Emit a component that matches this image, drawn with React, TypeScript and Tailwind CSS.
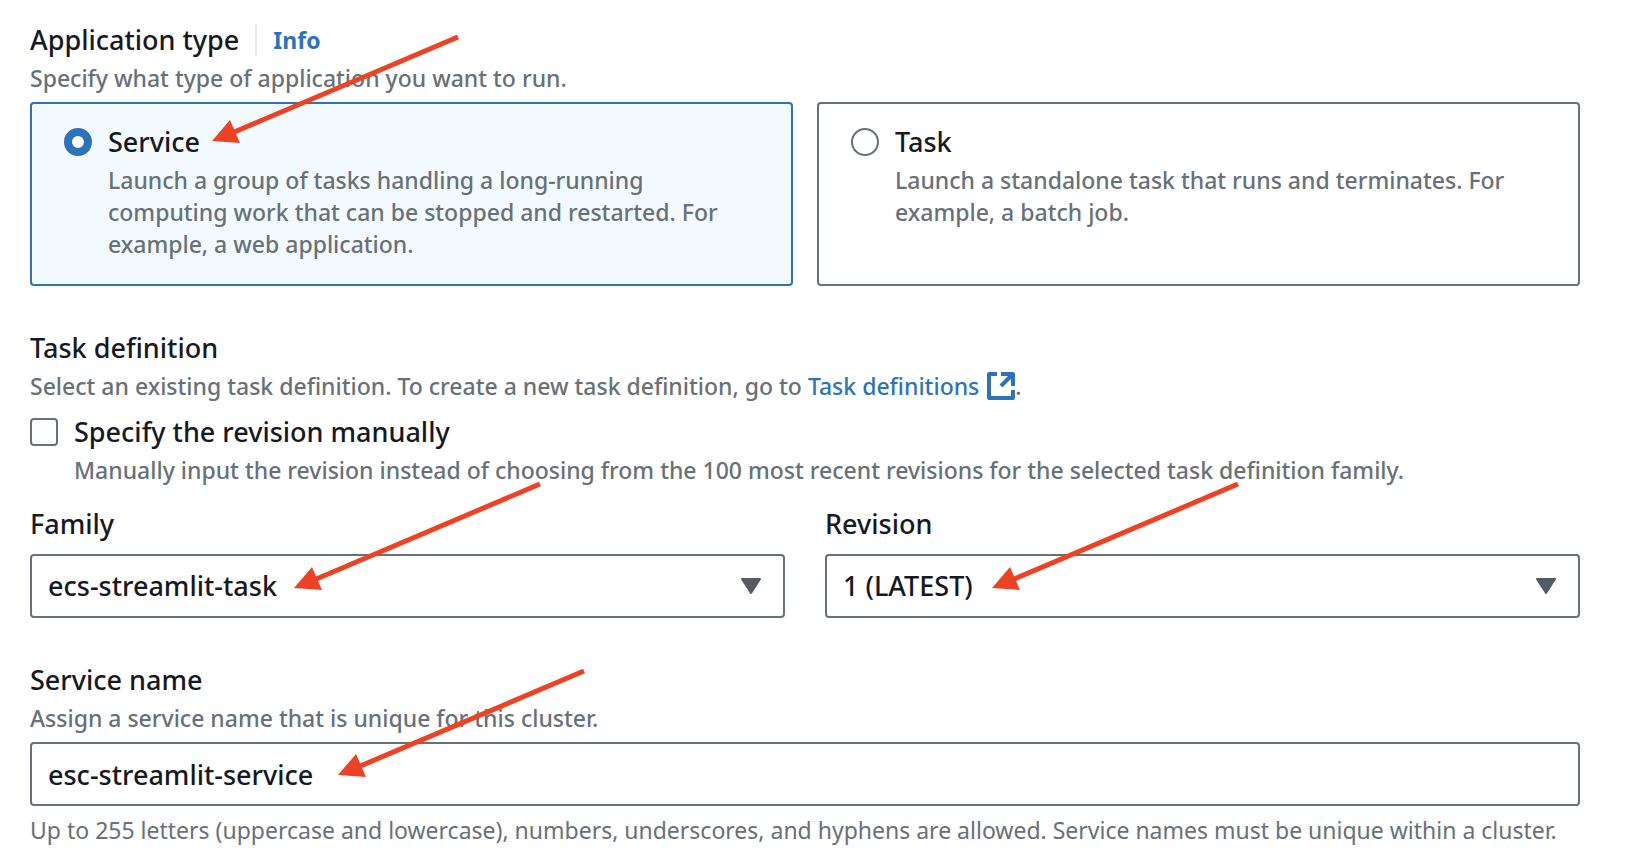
import { useState, type ReactNode } from "react";

function Arrow({ className }: { className: string }) {
  return (
    <svg
      className={`pointer-events-none absolute z-10 ${className}`}
      width="248"
      height="110"
      viewBox="0 0 248 110"
      aria-hidden="true"
    >
      <path d="M246 2 L20 98" stroke="#ec4226" strokeWidth="5" fill="none" />
      <path d="M0 106 L18 85 L28 108 Z" fill="#ec4226" />
    </svg>
  );
}

function ExternalIcon() {
  return (
    <svg
      className="ml-2 inline-block align-[-5px]"
      width="28"
      height="28"
      viewBox="0 0 28 28"
      fill="none"
      stroke="currentColor"
      strokeWidth="4"
      role="img"
      aria-label="Opens in a new tab"
    >
      <path d="M10 2H2v24h24v-8" strokeLinejoin="round" />
      <path d="M14 2h12v12" strokeLinejoin="round" />
      <path d="M25 3 14 14" />
    </svg>
  );
}

function Description({ children, id }: { children: ReactNode; id?: string }) {
  return (
    <p id={id} className="text-[23px] leading-8 text-[#687078]">
      {children}
    </p>
  );
}

type TileProps = {
  value: string;
  title: string;
  text: string;
  checked: boolean;
  onSelect: (value: string) => void;
  children?: ReactNode;
};

function Tile({ value, title, text, checked, onSelect, children }: TileProps) {
  return (
    <label
      className={`relative flex items-start gap-4 rounded-sm border-2 pt-[18px] pr-12 pb-6 pl-8 ${
        checked ? "border-[#2e73b8] bg-[#f2fafd]" : "border-[#687078] bg-white"
      }`}
    >
      <input
        type="radio"
        name="application-type"
        value={value}
        checked={checked}
        onChange={() => onSelect(value)}
        className="mt-1.5 size-7 shrink-0 appearance-none rounded-full border-2 border-[#687078] bg-white checked:border-8 checked:border-[#2e73b8]"
      />
      <span className="flex flex-col gap-0.5">
        <span className="text-[27px] leading-10">{title}</span>
        <span className="text-[23px] leading-8 text-[#687078]">{text}</span>
      </span>
      {children}
    </label>
  );
}

type SelectProps = { id: string; label: string; option: string; children?: ReactNode };

function SelectField({ id, label, option, children }: SelectProps) {
  return (
    <div className="relative flex flex-col gap-2.5">
      <label htmlFor={id} className="text-[27px] leading-10">
        {label}
      </label>
      <div className="relative">
        <select
          id={id}
          className="h-16 w-full appearance-none rounded-sm border-2 border-[#687078] bg-white pr-16 pl-4 text-[27px] font-medium"
        >
          <option>{option}</option>
        </select>
        <svg
          className="pointer-events-none absolute top-6 right-6"
          width="20"
          height="16"
          viewBox="0 0 20 16"
          fill="#545b64"
          stroke="#545b64"
          strokeWidth="2"
          strokeLinejoin="round"
          aria-hidden="true"
        >
          <path d="M1 1h18l-9 14Z" />
        </svg>
      </div>
      {children}
    </div>
  );
}

export default function App() {
  const [type, setType] = useState("service");

  return (
    <main className="bg-white pt-5 pr-[52px] pb-4 pl-[30px] font-['Noto_Sans','Open_Sans',sans-serif] font-medium text-[#16191f]">
      <fieldset>
        <div className="flex items-center">
          <legend className="text-[27px] leading-10">Application type</legend>
          <a
            href="#info"
            className="ml-4 border-l-2 border-[#eaeded] pl-4 text-[23px] leading-8 font-bold text-[#2e73b8]"
          >
            Info
          </a>
        </div>
        <div className="mt-0.5">
          <Description>Specify what type of application you want to run.</Description>
        </div>
        <div className="mt-2 grid grid-cols-2 gap-6">
          <Tile
            value="service"
            title="Service"
            text="Launch a group of tasks handling a long-running computing work that can be stopped and restarted. For example, a web application."
            checked={type === "service"}
            onSelect={setType}
          >
            <Arrow className="-top-[69px] left-[180px]" />
          </Tile>
          <Tile
            value="task"
            title="Task"
            text="Launch a standalone task that runs and terminates. For example, a batch job."
            checked={type === "task"}
            onSelect={setType}
          />
        </div>
      </fieldset>

      <section className="mt-[42px]">
        <h2 className="mb-0.5 text-[27px] leading-10">Task definition</h2>
        <Description>
          Select an existing task definition. To create a new task definition, go to{" "}
          <a href="#task-definitions" className="text-[#2e73b8]">
            Task definitions
            <ExternalIcon />
          </a>
          .
        </Description>
        <div className="mt-2.5 flex items-start gap-4">
          <input
            id="manual"
            type="checkbox"
            aria-describedby="manual-hint"
            className="mt-1.5 size-7 shrink-0 appearance-none rounded-sm border-2 border-[#687078] bg-white checked:bg-[#2e73b8]"
          />
          <div className="flex flex-col gap-0.5">
            <label htmlFor="manual" className="text-[27px] leading-10">
              Specify the revision manually
            </label>
            <Description id="manual-hint">
              Manually input the revision instead of choosing from the 100 most recent revisions for
              the selected task definition family.
            </Description>
          </div>
        </div>
        <div className="mt-[18px] grid grid-cols-2 gap-10">
          <SelectField id="family" label="Family" option="ecs-streamlit-task">
            <Arrow className="-top-[22px] left-[264px]" />
          </SelectField>
          <SelectField id="revision" label="Revision" option="1 (LATEST)">
            <Arrow className="-top-[22px] left-[167px]" />
          </SelectField>
        </div>
      </section>

      <section className="relative mt-[42px] flex flex-col">
        <label htmlFor="service-name" className="mb-0.5 text-[27px] leading-10">
          Service name
        </label>
        <Description>Assign a service name that is unique for this cluster.</Description>
        <input
          id="service-name"
          type="text"
          defaultValue="esc-streamlit-service"
          aria-describedby="service-name-hint"
          className="my-2 h-16 w-full rounded-sm border-2 border-[#687078] bg-white px-4 text-[27px] font-medium"
        />
        <p id="service-name-hint" className="text-[23px] leading-8 font-normal text-[#687078]">
          Up to 255 letters (uppercase and lowercase), numbers, underscores, and hyphens are allowed.
          Service names must be unique within a cluster.
        </p>
        <Arrow className="top-[9px] left-[308px]" />
      </section>
    </main>
  );
}
